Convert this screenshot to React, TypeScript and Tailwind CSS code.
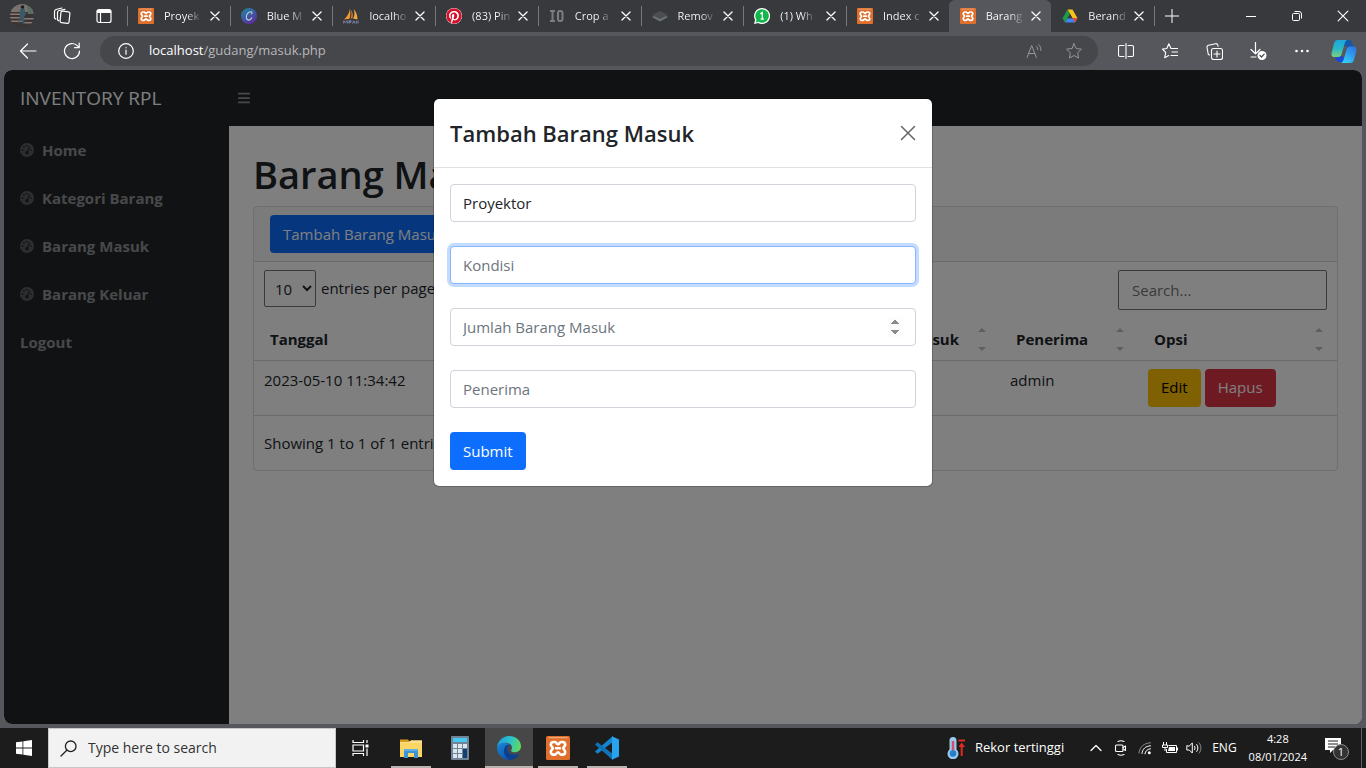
import type { ReactNode } from "react";
import { FaBars, FaGaugeHigh, FaPinterest } from "react-icons/fa6";

const stroke = {
  fill: "none",
  stroke: "currentColor",
  strokeLinecap: "round" as const,
  strokeLinejoin: "round" as const,
};

/* ---------- favicons and app logos ---------- */

function Xampp({ large = false }: { large?: boolean }) {
  return (
    <svg viewBox="0 0 24 24" className={large ? "size-6" : "size-4"}>
      <rect width="24" height="24" rx="1.500" fill="#df6f2c" />
      <path d="M2.500 1.700h19" stroke="#f3b48a" strokeWidth="1" />
      <path
        d="M7.500 6H9c1.600 0 1.600 2.300 3 2.300S13.400 6 15 6h1.500A2.700 2.700 0 0 1 19.200 8.700c0 1.900-1.900 2.100-1.900 3.600s1.900 1.700 1.900 3.600a2.700 2.700 0 0 1-2.700 2.700H15c-1.600 0-1.600-2.300-3-2.300s-1.400 2.300-3 2.300H7.500a2.700 2.700 0 0 1-2.700-2.700c0-1.900 1.900-2.100 1.900-3.600s-1.900-1.700-1.900-3.600A2.700 2.700 0 0 1 7.500 6zM10 12.300h4"
        fill="none"
        stroke="#fff"
        strokeWidth="2.600"
        strokeLinecap="round"
        strokeLinejoin="round"
      />
    </svg>
  );
}

function PhpMyAdmin() {
  return (
    <svg viewBox="0 0 16 16" className="size-4">
      <path d="M7 .5C6.500 4 5 8 1 11.500l5.500-.8C7.500 7 7.600 4 7 .5z" fill="#f29a2e" />
      <path d="M10.500 1c1.500 3.500 1.300 7-.5 9.500l4.500 1C14.500 7 13 3.500 10.500 1z" fill="#f5a742" />
      <path d="M7.800 2c1 3 .8 6-.2 8.500h1.700C10.300 8 10 4.500 7.800 2z" fill="#d9822b" />
      <path d="M.8 15.500V12.800l1.700 1.500 1.700-1.500v2.700M6 12.800v2.700M6 12.800h2v1.500H6M9.500 15.500l1.200-2.700 1.200 2.700M13.300 12.800v2.700M15 12.800v2.700" fill="none" stroke="#8189ad" />
    </svg>
  );
}

function Canva() {
  return (
    <svg viewBox="0 0 16 16" className="size-4">
      <defs>
        <linearGradient id="canva" x1="0" y1="0" x2="0.6" y2="1">
          <stop offset="0" stopColor="#1f8a96" />
          <stop offset="0.5" stopColor="#3a5fa6" />
          <stop offset="1" stopColor="#5b2f9e" />
        </linearGradient>
      </defs>
      <circle cx="8" cy="8" r="8" fill="url(#canva)" />
      <path d="M10.600 5.900c.7-.6.6-2.200-.9-2.200C7.400 3.700 5.300 6.500 5.300 9.100c0 1.800.9 3 2.300 3 1.400 0 2.600-1 3.200-2.300" {...stroke} stroke="#b9d2e0" strokeWidth="1.100" />
    </svg>
  );
}

function CropIO() {
  return (
    <svg viewBox="0 0 16 16" className="size-4" fill="none" stroke="#7c7d80" strokeWidth="2">
      <path d="M1 3h5M1 13h5M3.500 3v10" />
      <rect x="9" y="3" width="4.500" height="10" rx="2" />
    </svg>
  );
}

function Layers() {
  return (
    <svg viewBox="0 0 16 16" className="size-4">
      <path d="M0 9 8 5.500 16 9 8 13.500z" fill="#6d7276" />
      <path d="M0 7 8 3l8 4-8 4z" fill="#4a4e53" />
    </svg>
  );
}

function WhatsAppBadge() {
  return (
    <svg viewBox="0 0 16 16" className="size-4">
      <path d="M8 0a8 8 0 1 1-3.800 15L0 16l1.100-4A8 8 0 0 1 8 0z" fill="#fff" />
      <path d="M8 1.200a6.800 6.800 0 1 1-3.500 12.600l-2.800.7.8-2.700A6.800 6.800 0 0 1 8 1.200z" fill="#12b84a" />
      <path d="M6.400 5.900 8.300 4.600v6.600M6.600 11.200h3.400" fill="none" stroke="#fff" strokeWidth="1.300" />
    </svg>
  );
}

function Drive() {
  return (
    <svg viewBox="0 0 16 16" className="size-4">
      <path d="M10.500 1.500h-5l5 8.700h5z" fill="#fbc116" />
      <path d="M5.500 10.200h10L13 14.500H3z" fill="#4285f4" />
      <path d="M5.500 1.500 8 5.800 5.500 10.200 3 14.500.5 10.200z" fill="#1e9b4a" />
      <path d="M13 14.500 10.500 10.200h5z" fill="#ea4335" />
      <path d="M8 5.800 5.500 10.200h5z" fill="#38393d" />
    </svg>
  );
}

function Copilot() {
  return (
    <svg viewBox="0 0 26 24" className="h-6 w-[26px]">
      <defs>
        <linearGradient id="cpA" x1="0.300" y1="0" x2="0.300" y2="1">
          <stop offset="0" stopColor="#1ea7dc" />
          <stop offset="0.500" stopColor="#27b7c8" />
          <stop offset="1" stopColor="#7fd07a" />
        </linearGradient>
        <linearGradient id="cpB" x1="1" y1="0" x2="0.300" y2="1">
          <stop offset="0" stopColor="#2f6fe0" />
          <stop offset="0.500" stopColor="#2f9bf0" />
          <stop offset="1" stopColor="#35d0f5" />
        </linearGradient>
      </defs>
      <path d="M13 1h5c2 0 2.600 1.300 3.200 3.400L22.500 8h-6c-2 0-2.800-1-3.200-2.500z" fill="#1456a8" />
      <path d="M13 23H8c-2 0-2.600-1.300-3.200-3.400L4 17h6c2 0 2.600 1.500 3 3z" fill="#1a49d6" />
      <path d="M7 1h9.500c-1.800.4-2.500 2-3 4l-3 10.500c-.5 1.600-1.500 2.500-3.200 2.500H3.500C.8 18 0 16 .8 13L3 4.500C3.700 2 5 1 7 1z" fill="url(#cpA)" />
      <path d="M19 24H9.800c1.700-.4 2.400-2 3-4l3-10c.5-1.600 1.500-2.500 3.200-2.500h3.500c2.700 0 3.500 2 2.700 5L23 20.500c-.7 2.500-2 3.500-4 3.500z" fill="url(#cpB)" />
    </svg>
  );
}

function Edge() {
  return (
    <svg viewBox="0 0 24 24" className="size-6">
      <defs>
        <linearGradient id="edTop" x1="0" y1="0.300" x2="1" y2="0.500">
          <stop offset="0" stopColor="#1b9de2" />
          <stop offset="0.550" stopColor="#2cc3c8" />
          <stop offset="1" stopColor="#63d957" />
        </linearGradient>
        <linearGradient id="edBase" x1="0" y1="0" x2="0.700" y2="1">
          <stop offset="0" stopColor="#1a86d9" />
          <stop offset="1" stopColor="#0c4fa3" />
        </linearGradient>
      </defs>
      <path d="M0 12a12 12 0 0 0 21.800 6.800c.5-.7-.1-1.100-.7-.8C17 20 11.500 18.500 10.500 14c-.4-2 .5-4 2-5C9 4.500 1 7 0 12z" fill="url(#edBase)" />
      <path d="M8 11c-2.500 4-.5 10.500 5 12.900C17 23.600 20 21.600 21.800 18.800c.5-.7-.1-1.100-.7-.8C17 20 11.500 18.500 10.500 14c-.4-2 .5-4 2-5-1.800-.5-3.500.3-4.500 2z" fill="#0d3f8f" />
      <path d="M0 12C.4 5 5.500 0 12 0c7 0 12 4.800 12 10.300 0 3.700-2.800 6-6.200 6-2.800 0-4.200-1.200-3.500-2.200 1.100-1.600 1-4.400-1.300-6C9 5.300 1.500 6.500 0 12z" fill="url(#edTop)" />
    </svg>
  );
}

function VSCode() {
  return (
    <svg viewBox="0 0 24 24" className="size-6">
      <path d="M0 15.500 2.500 17.700 17.500 6.300V.3z" fill="#1485cf" />
      <path d="M0 8.500 2.500 6.300 17.500 17.700v6z" fill="#0f73b8" />
      <path d="M17 .3 24 3.500v17l-7 3.200z" fill="#2aa3ee" />
    </svg>
  );
}

function Explorer() {
  return (
    <svg viewBox="0 0 24 20" className="h-5 w-6">
      <path d="M1 1.500h8l2 2.500H1z" fill="#d99a1c" />
      <path d="M1 4h9l2-1.500h11V19H1z" fill="#fbd665" />
      <path d="M1 4h9l2-1.500h11V5H1z" fill="#fce08c" />
      <path d="M5 11h14v9h-4v-5H9v5H5z" fill="#3c94d6" />
      <path d="M5 11h14v2H5z" fill="#5bb0e6" />
    </svg>
  );
}

function Calculator() {
  return (
    <svg viewBox="0 0 18 24" className="h-6 w-[18px]">
      <rect width="18" height="24" rx="1" fill="#6f8494" />
      <rect x="2" y="2" width="14" height="4" fill="#45c8f0" />
      <path d="M2 8h4v4H2zM7 8h4v4H7zM12 8h4v4h-4zM2 13h4v4H2zM7 13h4v4H7zM2 18h4v4H2zM7 18h4v4H7z" fill="#dbe6ee" />
      <path d="M12 13h4v9h-4z" fill="#153f73" />
    </svg>
  );
}

/* ---------- browser ---------- */

type TabInfo = { title: string; icon: ReactNode; active?: boolean; divider?: boolean };

const tabs: TabInfo[] = [
  { title: "Proyek", icon: <Xampp />, divider: true },
  { title: "Blue M", icon: <Canva />, divider: true },
  { title: "localho", icon: <PhpMyAdmin />, divider: true },
  { title: "(83) Pin", icon: <FaPinterest className="size-4 rounded-full bg-white text-[#d4102a]" />, divider: true },
  { title: "Crop a", icon: <CropIO />, divider: true },
  { title: "Remov", icon: <Layers />, divider: true },
  { title: "(1) Wh", icon: <WhatsAppBadge />, divider: true },
  { title: "Index c", icon: <Xampp />, divider: true },
  { title: "Barang", icon: <Xampp />, active: true },
  { title: "Berand", icon: <Drive /> },
];

function Cross({ className }: { className: string }) {
  return (
    <svg viewBox="0 0 16 16" className={className} {...stroke}>
      <path d="m1.500 1.500 13 13m0-13-13 13" />
    </svg>
  );
}

function BrowserTab({ title, icon, active, divider }: TabInfo) {
  return (
    <div className={`flex min-w-0 flex-1 items-center pr-2 ${active ? "rounded-t-md bg-[#56575c]" : ""}`}>
      <span className={`h-5 w-px ${divider ? "bg-[#77787b]" : ""}`} />
      <span className="ml-2.5 shrink-0">{icon}</span>
      <span className="ml-2.5 bg-linear-to-r from-white from-65% to-white/20 bg-clip-text text-[11px] whitespace-nowrap text-transparent">
        {title}
      </span>
      <button aria-label={`Close ${title}`} className="ml-auto shrink-0 p-0.5">
        <Cross className="size-2.5 stroke-2" />
      </button>
    </div>
  );
}

function TabStrip() {
  return (
    <div className="flex h-8 bg-[#38393d] text-white">
      <div className="flex w-[127px] shrink-0 items-center pl-0.5">
        <button aria-label="Profile" className="flex w-10 justify-center">
          <svg viewBox="0 0 24 24" className="size-6">
            <clipPath id="face"><circle cx="12" cy="12" r="12" /></clipPath>
            <g clipPath="url(#face)">
              <rect width="24" height="24" fill="#3a3534" />
              <path d="M0 0h24v8H0z" fill="#77736f" />
              <path d="M0 9.500h10v1.500H0zM0 13h11v1.500H0zM0 16.500h12V18H0zM14 14h10v1.500H14zM14 18h10v1.500H14z" fill="#8a7a74" />
              <path d="m10 5 4-1 2 6-2 3 1 7h-2l-2-6-2 5H8l2-7z" fill="#3a5a66" />
              <circle cx="12.500" cy="3" r="1.800" fill="#231c1e" />
              <path d="M17 2h7v8h-6z" fill="#5d6c63" />
            </g>
          </svg>
        </button>
        <button aria-label="Workspaces" className="flex w-10 justify-center">
          <svg viewBox="0 0 18 18" className="size-[18px]" {...stroke} strokeWidth="1.200">
            <rect x="7.500" y="4.500" width="9" height="11.500" rx="1.500" transform="rotate(6 12 10)" />
            <path d="M5.800 13.800 4.500 13V5.500c0-1 .6-1.700 1.500-2L12 2.300" />
            <path d="M2.800 12 1.500 11V4.500c0-1 .5-1.700 1.400-2L9 1" />
          </svg>
        </button>
        <button aria-label="Tab actions" className="flex w-11 justify-center">
          <svg viewBox="0 0 16 16" className="size-4" {...stroke} strokeWidth="1.200">
            <rect x="1" y="1.500" width="14" height="13" rx="2" />
            <path d="M1.500 2.500h13v2h-13z" fill="currentColor" />
            <path d="M4.500 5v9" />
          </svg>
        </button>
      </div>
      <div className="flex min-w-0 max-w-[1027px] flex-1">
        {tabs.map((t) => (
          <BrowserTab key={t.title} {...t} />
        ))}
      </div>
      <button aria-label="New tab" className="flex shrink-0 items-center">
        <span className="mr-2.5 h-5 w-px bg-[#77787b]" />
        <svg viewBox="0 0 14 14" className="size-3.5" {...stroke}><path d="M7 0v14M0 7h14" /></svg>
      </button>
      <div className="ml-auto flex shrink-0">
        <button aria-label="Minimize" className="flex w-[46px] items-center justify-center">
          <svg viewBox="0 0 10 10" className="size-2.5" fill="none" stroke="currentColor"><path d="M0 5.500h10" /></svg>
        </button>
        <button aria-label="Restore" className="flex w-[46px] items-center justify-center">
          <svg viewBox="0 0 10 10" className="size-2.5" fill="none" stroke="currentColor">
            <rect x="0.500" y="2.500" width="7" height="7" rx="1" />
            <path d="M2.500.5H7A2.500 2.500 0 0 1 9.500 3v4.500" />
          </svg>
        </button>
        <button aria-label="Close window" className="flex w-[46px] items-center justify-center">
          <Cross className="size-3 stroke-[1.5]" />
        </button>
      </div>
    </div>
  );
}

function ToolButton({ label, children }: { label: string; children: ReactNode }) {
  return (
    <button aria-label={label} className="flex w-11 shrink items-center justify-center">
      {children}
    </button>
  );
}

function Toolbar() {
  return (
    <div className="flex h-[38px] items-center bg-[#56575c] pl-1.5 text-white">
      <ToolButton label="Back">
        <svg viewBox="0 0 18 18" className="size-[18px]" {...stroke} strokeWidth="1.200"><path d="M17 9H1.500M8.500 2l-7 7 7 7" /></svg>
      </ToolButton>
      <ToolButton label="Refresh">
        <svg viewBox="0 0 18 18" className="size-[18px]" {...stroke} strokeWidth="1.200">
          <path d="M16.500 9A7.500 7.500 0 1 1 14.500 3.900L16 5.500M16.200 1v4.700h-4.700" />
        </svg>
      </ToolButton>
      <div className="mx-1.5 flex h-[30px] min-w-0 flex-1 items-center rounded-full bg-[#46474b] pr-4 pl-[18px]">
        <svg viewBox="0 0 16 16" className="size-4" {...stroke} strokeWidth="1.200">
          <circle cx="8" cy="8" r="7.300" /><path d="M8 7.200v4M8 4.600v.2" />
        </svg>
        <p className="ml-[15px] text-[13px] text-[#b6b7b9]"><span className="text-white">localhost</span>/gudang/masuk.php</p>
        <div className="ml-auto flex items-center gap-6 text-[#95969a]">
          <svg viewBox="0 0 16 16" className="size-4" {...stroke}>
            <path d="m1 14.500 4.700-12 4.700 12M2.600 10.500h6.200M10.500 3.500c1 .8 1.300 2 1.200 3.200M12.500 1.500c2 1.500 2.700 3.700 2.300 6" />
          </svg>
          <svg viewBox="0 0 16 16" className="size-4" {...stroke}>
            <path d="m8 .8 2.200 4.700 5.200.7-3.800 3.600 1 5.200L8 12.500 3.400 15l1-5.200L.6 6.200l5.200-.7z" />
          </svg>
        </div>
      </div>
      <ToolButton label="Split screen">
        <svg viewBox="0 0 16 16" className="size-4" {...stroke} strokeWidth="1.100">
          <path d="M6 2.500H2A1.500 1.500 0 0 0 .5 4v8A1.500 1.500 0 0 0 2 13.500h4M10 2.500h4A1.500 1.500 0 0 1 15.500 4v8a1.500 1.500 0 0 1-1.500 1.500h-4M8 .5v15" />
        </svg>
      </ToolButton>
      <ToolButton label="Favorites">
        <svg viewBox="0 0 16 16" className="size-4" {...stroke} strokeWidth="1.100">
          <path d="M9 5.500 6.800.8 4.800 5.500l-4.300.6 3.200 3.400-1 5.200 4-2.200M9 5.500h6.500M10 9h5.500M9 12.500h6.500" />
        </svg>
      </ToolButton>
      <ToolButton label="Collections">
        <svg viewBox="0 0 17 17" className="size-[17px]" {...stroke} strokeWidth="1.100">
          <rect x="5.500" y="5.500" width="11" height="11" rx="2" />
          <path d="M11 8v6M8 11h6M3.500 12 2.300 11.500 1 4.500C.8 3.300 1.300 2.500 2.400 2.200L9.500.7c1.200-.2 2 .3 2.300 1.400l.3 1.200" />
        </svg>
      </ToolButton>
      <ToolButton label="Downloads">
        <svg viewBox="0 0 18 18" className="size-[18px]" {...stroke} strokeWidth="1.200">
          <path d="M6.500.5v11M2 7.500l4.500 4.300L11 7.500M2 15h5" />
          <circle cx="13" cy="13.500" r="4.500" fill="#fff" stroke="none" />
          <path d="m11 13.500 1.500 1.500 2.700-2.900" stroke="#444" />
        </svg>
      </ToolButton>
      <ToolButton label="Settings and more">
        <svg viewBox="0 0 14 4" className="h-1 w-3.5" fill="currentColor"><circle cx="1.500" cy="2" r="1.300" /><circle cx="7" cy="2" r="1.300" /><circle cx="12.500" cy="2" r="1.300" /></svg>
      </ToolButton>
      <button aria-label="Copilot" className="flex w-[42px] justify-center pr-0.5"><Copilot /></button>
    </div>
  );
}

/* ---------- inventory page ---------- */

const navItems = ["Home", "Kategori Barang", "Barang Masuk", "Barang Keluar"];

function Sidebar() {
  return (
    <nav className="w-[225px] shrink-0 bg-[#212529] text-[15px] font-bold text-white/50">
      {navItems.map((item) => (
        <a key={item} href="#" className="flex h-12 items-center px-4">
          <FaGaugeHigh className="mr-2 size-3.5 text-white/25" />
          {item}
        </a>
      ))}
      <a href="#" className="flex h-12 items-center px-4">Logout</a>
    </nav>
  );
}

function HeaderCell({ children, className }: { children: ReactNode; className?: string }) {
  return (
    <th className={`h-[42px] pr-3.5 pl-4 text-left font-bold ${className ?? ""}`}>
      <span className="flex items-center justify-between whitespace-nowrap">
        {children}
        <svg viewBox="0 0 8 24" className="h-6 w-2" fill="#bcbdbe"><path d="M0 5 4 1l4 4zM0 20h8l-4 4z" /></svg>
      </span>
    </th>
  );
}

function StockCard() {
  return (
    <section className="mt-2 rounded border border-black/13 text-[15px]">
      <div className="border-b border-black/13 bg-black/3 px-4 py-2">
        <button className="h-[38px] rounded bg-[#0d6efd] px-[13px] whitespace-nowrap text-white">Tambah Barang Masuk</button>
      </div>
      <div className="flex items-start justify-between px-2.5 py-2">
        <label className="flex items-center gap-[5px]">
          <select className="h-[37px] w-[52px] rounded-xs border border-[#767676] pl-1.5 text-[15px]">
            <option>10</option>
            <option>25</option>
          </select>
          entries per page
        </label>
        <input aria-label="Search" placeholder="Search..." className="h-10 w-[209px] rounded-xs border border-[#767676] px-[13px] placeholder:text-[#757575]" />
      </div>
      <table className="w-full table-fixed border-collapse">
        <thead>
          <tr className="border-b border-[#d4d7da]">
            <HeaderCell className="w-[221px]">Tanggal</HeaderCell>
            <HeaderCell>Nama Barang</HeaderCell>
            <HeaderCell>Kondisi</HeaderCell>
            <HeaderCell className="w-[221px]">Jumlah Barang Masuk</HeaderCell>
            <HeaderCell className="w-[138px]">Penerima</HeaderCell>
            <HeaderCell className="w-[199px]">Opsi</HeaderCell>
          </tr>
        </thead>
        <tbody>
          <tr className="border-b border-[#d4d7da] align-top">
            <td className="px-2.5 py-2">2023-05-10 11:34:42</td>
            <td className="px-2.5 py-2">Proyektor</td>
            <td className="px-2.5 py-2">Baik</td>
            <td className="px-2.5 py-2">10</td>
            <td className="px-2.5 py-2">admin</td>
            <td className="px-2.5 py-2">
              <div className="flex gap-1">
                <button className="h-[38px] rounded bg-[#ffc107] px-[13px] text-black">Edit</button>
                <button className="h-[38px] rounded bg-[#dc3545] px-[13px] text-white">Hapus</button>
              </div>
            </td>
          </tr>
        </tbody>
      </table>
      <p className="px-2.5 py-[15px] leading-6">Showing 1 to 1 of 1 entries</p>
    </section>
  );
}

const field =
  "block h-[38px] w-full rounded border bg-white px-3 text-[15px] text-[#212529] outline-none placeholder:text-[#6c757d]";

function AddItemDialog() {
  return (
    <div className="absolute inset-0 bg-black/50 px-4 pt-7">
      <div role="dialog" aria-labelledby="dialog-title" className="mx-auto max-w-[500px] rounded-md border border-black/20 bg-white bg-clip-padding">
        <header className="flex items-center justify-between border-b border-[#dee2e6] p-4">
          <h4 id="dialog-title" className="text-[22px] leading-9 font-semibold">Tambah Barang Masuk</h4>
          <button aria-label="Close" className="text-black/60"><Cross className="size-4 stroke-[1.5]" /></button>
        </header>
        <form className="flex flex-col items-start gap-6 p-4">
          <select aria-label="Barang" className={`${field} appearance-none border-[#ced4da]`}>
            <option>Proyektor</option>
          </select>
          <input aria-label="Kondisi" placeholder="Kondisi" className={`${field} border-[#86b7fe] ring-3 ring-[#0d6efd]/25`} />
          <input
            aria-label="Jumlah Barang Masuk"
            type="number"
            placeholder="Jumlah Barang Masuk"
            className={`${field} border-[#ced4da] [&::-webkit-inner-spin-button]:opacity-100`}
          />
          <input aria-label="Penerima" placeholder="Penerima" className={`${field} border-[#ced4da]`} />
          <button type="button" className="h-[38px] rounded bg-[#0d6efd] px-[13px] text-[15px] text-white">Submit</button>
        </form>
      </div>
    </div>
  );
}

function InventoryPage() {
  return (
    <div className="relative flex min-h-0 flex-1 flex-col overflow-hidden rounded-lg bg-white text-[#212529]">
      <header className="flex h-14 shrink-0 items-center bg-[#212529] pl-4">
        <a href="#" className="w-[217px] text-[19px] text-white">INVENTORY RPL</a>
        <button aria-label="Toggle menu" className="text-white/50"><FaBars className="size-3.5" /></button>
      </header>
      <div className="flex min-h-0 flex-1">
        <Sidebar />
        <main className="min-w-0 flex-1 p-6">
          <h1 className="text-[38px] leading-[48px] font-semibold">Barang Masuk</h1>
          <StockCard />
        </main>
      </div>
      <AddItemDialog />
    </div>
  );
}

/* ---------- taskbar ---------- */

function TaskButton({ label, state = "idle", children }: { label: string; state?: "idle" | "open" | "active"; children: ReactNode }) {
  return (
    <button aria-label={label} className={`flex h-10 w-12 flex-col items-center ${state === "active" ? "bg-[#474747]" : ""}`}>
      <span className="flex flex-1 items-center pt-0.5">{children}</span>
      <span className={`h-0.5 ${state === "idle" ? "" : "bg-[#b9b4b0]"} ${state === "active" ? "w-full" : "w-10"}`} />
    </button>
  );
}

function Taskbar() {
  return (
    <footer className="flex h-10 shrink-0 items-center bg-[#1c1c1c] text-white">
      <button aria-label="Start" className="flex w-12 justify-center">
        <svg viewBox="0 0 16 16" className="size-4" fill="currentColor"><path d="M0 2.300 6.500 1.400v6.200H0zM7.300 1.300 16 0v7.600H7.300zM0 8.400h6.500v6.200L0 13.700zM7.300 8.400H16V16l-8.700-1.300z" /></svg>
      </button>
      <label className="flex h-10 w-72 items-center border border-[#c8c8c8] bg-[#f2f2f2] pl-[11px] text-[#222]">
        <svg viewBox="0 0 17 17" className="size-[17px]" {...stroke} strokeWidth="1.300"><circle cx="10.700" cy="6.300" r="5.300" /><path d="M6.800 10.200 1 16" /></svg>
        <input aria-label="Type here to search" placeholder="Type here to search" className="ml-[11px] min-w-0 flex-1 text-sm outline-none placeholder:text-[#333]" />
      </label>
      <div className="mr-[3px]">
        <TaskButton label="Task view">
          <svg viewBox="0 0 17 16" className="h-4 w-[17px]" fill="none" stroke="currentColor" strokeWidth="1.200">
            <path d="M1 0v2.500h10.500V0M1 16v-2.500h10.500V16M1 5h10.500v6H1zM15 0v3M15 8.500V16" />
            <path d="M13.500 4.500h3v3h-3z" fill="currentColor" stroke="none" />
          </svg>
        </TaskButton>
      </div>
      <div className="flex gap-px">
        <TaskButton label="File Explorer" state="open"><Explorer /></TaskButton>
        <TaskButton label="Calculator"><Calculator /></TaskButton>
        <TaskButton label="Microsoft Edge" state="active"><Edge /></TaskButton>
        <TaskButton label="XAMPP" state="open"><Xampp large /></TaskButton>
        <TaskButton label="Visual Studio Code" state="open"><VSCode /></TaskButton>
      </div>
      <button className="ml-auto flex items-center text-[13px]">
        <svg viewBox="0 0 18 22" className="mr-2.5 h-[22px] w-[18px]">
          <path d="M2.500 3.500a3.500 3.500 0 0 1 7 0v9a5.500 5.500 0 1 1-7 0z" fill="#9cc9f0" />
          <path d="M6 4v12" stroke="#d3506a" strokeWidth="2.500" />
          <circle cx="6" cy="16.500" r="3.300" fill="#2381cc" />
          <path d="M11.500 2.500H18v2h-6.500zM14.700 5.500 18 10h-2.300v9h-2v-9h-2.200z" fill="#e32a20" />
        </svg>
        Rekor tertinggi
      </button>
      <div className="ml-[26px] flex items-center gap-2">
        <svg viewBox="0 0 12 16" className="mr-1 h-4 w-3" {...stroke} strokeWidth="1.300"><path d="m1 10.500 5-5 5 5" /></svg>
        <svg viewBox="0 0 14 16" className="h-4 w-3.5" {...stroke} strokeWidth="1.100">
          <rect x="1.500" y="5" width="7.500" height="6.500" rx="1" /><path d="m9 7.500 2.500-1.500v4.500L9 9M4 1.500c2-1 4-1 6 0M4 14.500c2 1 4 1 6 0" />
        </svg>
        <svg viewBox="0 0 14 14" className="mx-0.5 size-3.5" {...stroke}>
          <path d="M1 12C1.500 6 6 2 12.500 1.800" stroke="#8d8d8d" />
          <path d="M4 12.500c.3-4.500 3.500-7.500 8.500-7.700M7 12.800c.3-2.700 2.300-4.800 5.500-5" />
          <circle cx="11.300" cy="11.700" r="1.500" fill="currentColor" stroke="none" />
        </svg>
        <svg viewBox="0 0 16 12" className="h-3 w-4" fill="none" stroke="currentColor">
          <path d="M6.500 3.500h8v7h-10V7M1.500 0v3M4.500 0v3M.5 3h5v2.500h-5zM3 5.500V9" />
          <path d="M7 5h6v4H6zM14.500 5.500H16v3h-1.500z" fill="currentColor" stroke="none" />
        </svg>
        <svg viewBox="0 0 16 14" className="h-3.5 w-4" {...stroke}>
          <path d="M.8 5v4h2.500l3 3V2l-3 3zM8.500 5.200c.8 1.100.8 2.500 0 3.600M10.700 3.500c1.700 2 1.700 5 0 7" />
          <path d="M13 1.800c2.600 3 2.600 7.400 0 10.400" stroke="#8d8d8d" />
        </svg>
      </div>
      <button className="ml-2.5 text-xs">ENG</button>
      <div className="ml-3 text-center text-[11px] leading-[18px]">
        <p>4:28</p>
        <p>08/01/2024</p>
      </div>
      <button aria-label="Notifications" className="relative ml-[18px]">
        <svg viewBox="0 0 24 24" className="size-6">
          <path d="M0 2h16v12H8l-3 3v-3H0z" fill="#fff" />
          <path d="M3 5h10M3 8h10M3 11h7" stroke="#1c1c1c" />
          <circle cx="16" cy="16" r="7.500" fill="#333" stroke="#8c8c8c" />
        </svg>
        <span className="absolute right-[5px] bottom-0 text-[11px] leading-4">1</span>
      </button>
      <span className="mr-1 ml-3 h-10 w-px bg-[#5f5f5f]" />
    </footer>
  );
}

export default function App() {
  return (
    <div className="flex h-screen flex-col bg-[#56575c] font-['Open_Sans','Noto_Sans',sans-serif]">
      <TabStrip />
      <Toolbar />
      <div className="flex min-h-0 flex-1 px-1 pb-1">
        <InventoryPage />
      </div>
      <Taskbar />
    </div>
  );
}
